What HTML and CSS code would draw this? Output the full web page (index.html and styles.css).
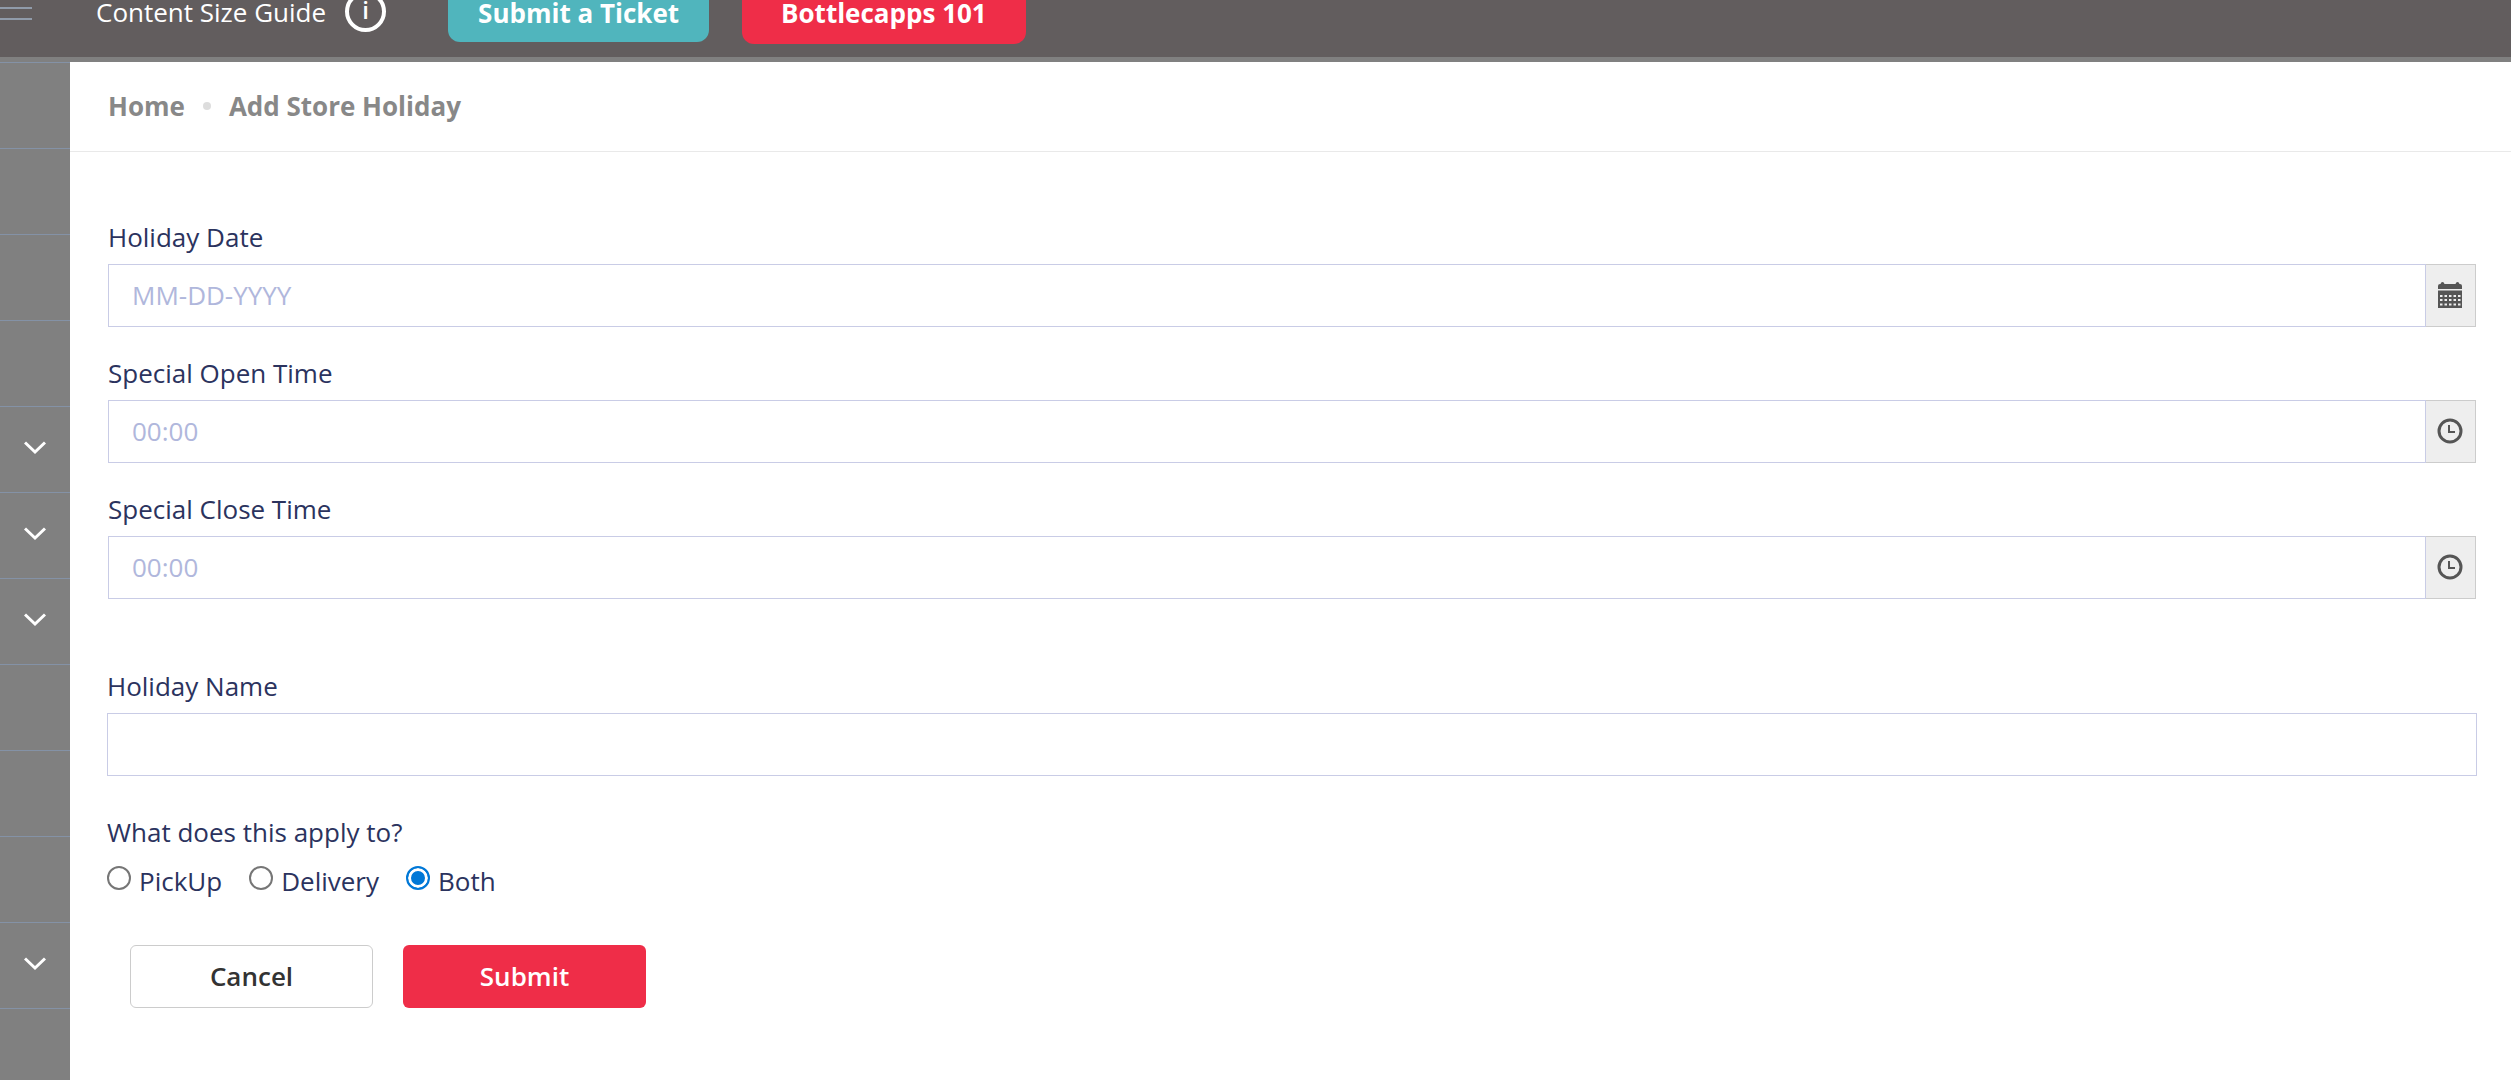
FILE: index.html
```html
<!DOCTYPE html>
<html lang="en">
<head>
    <meta charset="UTF-8">
    <meta name="viewport" content="width=device-width, initial-scale=1.0">
    <title>Add Store Holiday</title>
    <link rel="stylesheet" href="styles.css">
</head>
<body>
    <header class="topbar">
        <button type="button" class="menu-toggle" aria-label="Toggle menu">
            <span></span>
            <span></span>
        </button>
        <a href="#guide" class="guide-link">
            Content Size Guide
            <span class="info-icon">i</span>
        </a>
        <a href="#ticket" class="top-btn ticket-btn">Submit a Ticket</a>
        <a href="#help" class="top-btn help-btn">Bottlecapps 101</a>
    </header>

    <div class="layout">
        <!-- Collapsed sidebar -->
        <nav class="sidebar" aria-label="Main menu">
            <a href="#m1" class="side-item"></a>
            <a href="#m2" class="side-item"></a>
            <a href="#m3" class="side-item"></a>
            <a href="#m4" class="side-item"></a>
            <a href="#m5" class="side-item">
                <svg width="22" height="14" viewBox="0 0 22 14"><path d="M1 1.5 L11 11 L21 1.5"/></svg>
            </a>
            <a href="#m6" class="side-item">
                <svg width="22" height="14" viewBox="0 0 22 14"><path d="M1 1.5 L11 11 L21 1.5"/></svg>
            </a>
            <a href="#m7" class="side-item">
                <svg width="22" height="14" viewBox="0 0 22 14"><path d="M1 1.5 L11 11 L21 1.5"/></svg>
            </a>
            <a href="#m8" class="side-item"></a>
            <a href="#m9" class="side-item"></a>
            <a href="#m10" class="side-item"></a>
            <a href="#m11" class="side-item">
                <svg width="22" height="14" viewBox="0 0 22 14"><path d="M1 1.5 L11 11 L21 1.5"/></svg>
            </a>
            <a href="#m12" class="side-item"></a>
        </nav>

        <main class="content">
            <div class="breadcrumb">
                <a href="#home">Home</a>
                <span class="dot"></span>
                <a href="#holiday">Add Store Holiday</a>
            </div>

            <form class="holiday-form">
                <div class="form-group">
                    <label for="holidayDate">Holiday Date</label>
                    <div class="input-group">
                        <input type="text" id="holidayDate" placeholder="MM-DD-YYYY">
                        <button type="button" class="addon" aria-label="Pick a date">
                            <svg width="24" height="26" viewBox="0 0 24 26">
                                <path fill="#555" d="M0 7V4Q0 2 2 2H2.500Q3 0 4.500 0Q6 0 6.500 2H17.500Q18 0 19.500 0Q21 0 21.500 2H22Q24 2 24 4V7Z"/>
                                <path fill="#555" d="M0 8.500H24V26H0Z"/>
                                <path stroke="#eee" stroke-width="2" stroke-dasharray="2.500 2" d="M2 14H22.500M2 18H22.500M2 22.500H22.500"/>
                            </svg>
                        </button>
                    </div>
                </div>

                <div class="form-group">
                    <label for="openTime">Special Open Time</label>
                    <div class="input-group">
                        <input type="text" id="openTime" placeholder="00:00">
                        <button type="button" class="addon" aria-label="Pick open time">
                            <svg width="26" height="26" viewBox="0 0 26 26" fill="none" stroke="#555">
                                <circle cx="13" cy="13" r="11" stroke-width="3"/>
                                <path stroke-width="2" d="M12 7V14H18"/>
                            </svg>
                        </button>
                    </div>
                </div>

                <div class="form-group">
                    <label for="closeTime">Special Close Time</label>
                    <div class="input-group">
                        <input type="text" id="closeTime" placeholder="00:00">
                        <button type="button" class="addon" aria-label="Pick close time">
                            <svg width="26" height="26" viewBox="0 0 26 26" fill="none" stroke="#555">
                                <circle cx="13" cy="13" r="11" stroke-width="3"/>
                                <path stroke-width="2" d="M12 7V14H18"/>
                            </svg>
                        </button>
                    </div>
                </div>

                <div class="form-group name-group">
                    <label for="holidayName">Holiday Name</label>
                    <input type="text" id="holidayName">
                </div>

                <fieldset class="apply-group">
                    <legend>What does this apply to?</legend>
                    <div class="radio-row">
                        <label><input type="radio" name="apply" value="pickup">PickUp</label>
                        <label><input type="radio" name="apply" value="delivery">Delivery</label>
                        <label><input type="radio" name="apply" value="both" checked>Both</label>
                    </div>
                </fieldset>

                <div class="form-actions">
                    <button type="button" class="btn btn-cancel">Cancel</button>
                    <button type="submit" class="btn btn-submit">Submit</button>
                </div>
            </form>
        </main>
    </div>
</body>
</html>
```
FILE: styles.css
```css
:root {
    --bar-color: #625d5e;
    --side-color: #808080;
    --text-color: #2b335e;
    --border-color: #c9cce6;
    --red: #ef2d48;
    --teal: #50b5bd;
}

* {
    box-sizing: border-box;
    margin: 0;
    padding: 0;
}

body {
    font-family: 'Open Sans', sans-serif;
    font-size: 26px;
    line-height: 36px;
    color: var(--text-color);
    background-color: #fff;
    min-height: 100vh;
    display: flex;
    flex-direction: column;
    overflow: hidden;
}

a {
    color: inherit;
    text-decoration: none;
}

.topbar {
    display: flex;
    align-items: flex-end;
    height: 62px;
    background-color: var(--bar-color);
    border-bottom: 5px solid var(--side-color);
    color: #fff;
}

.menu-toggle {
    display: flex;
    flex-direction: column;
    gap: 9px;
    width: 32px;
    height: 50px;
    margin-right: 64px;
    background: none;
    border: none;
    cursor: pointer;
}

.menu-toggle span {
    width: 100%;
    height: 2px;
    background-color: #909baa;
}

.guide-link {
    display: flex;
    align-items: center;
    gap: 19px;
    margin: 0 62px 25px 0;
}

.info-icon {
    width: 41px;
    height: 41px;
    border: 4px solid #fff;
    border-radius: 50%;
    font-size: 24px;
    font-weight: 600;
    line-height: 30px;
    text-align: center;
}

.top-btn {
    padding: 11px 30px 13px;
    margin-bottom: 15px;
    border-radius: 12px;
    font-weight: 700;
    line-height: 32px;
}

.ticket-btn {
    margin-right: 33px;
    background-color: var(--teal);
}

.help-btn {
    padding: 11px 39px 15px;
    margin-bottom: 13px;
    background-color: var(--red);
}

.layout {
    display: flex;
    flex: 1;
}

/* Sidebar */
.sidebar {
    width: 70px;
    height: calc(100vh - 62px);
    overflow: hidden;
    background-color: var(--side-color);
}

.side-item {
    display: flex;
    align-items: center;
    justify-content: center;
    height: 86px;
    padding-bottom: 4px;
    border-top: 1px solid #8492a6;
}

.side-item svg {
    fill: none;
    stroke: #fff;
    stroke-width: 3;
}

/* Page content */
.content {
    flex: 1;
}

.breadcrumb {
    display: flex;
    align-items: center;
    gap: 18px;
    height: 90px;
    padding: 0 0 2px 38px;
    border-bottom: 1px solid #e9e9e9;
    color: #888;
    font-weight: 700;
}

.dot {
    width: 8px;
    height: 8px;
    border-radius: 50%;
    background-color: #ddd;
}

.holiday-form {
    padding: 67px 34px 0 37px;
}

.form-group {
    display: flex;
    flex-direction: column;
    gap: 9px;
    margin: 0 1px 28px;
}

.input-group {
    display: flex;
}

input[type="text"] {
    flex: 1;
    height: 63px;
    min-height: 63px;
    padding: 0 23px 1px;
    border: 1px solid var(--border-color);
    font: inherit;
    color: inherit;
    background-color: #fff;
}

input::placeholder {
    color: #b0b7dc;
    opacity: 1;
}

.addon {
    display: flex;
    align-items: center;
    justify-content: center;
    width: 50px;
    padding: 0 2px 2px 0;
    border: 1px solid #ccc;
    border-left: none;
    background-color: #eee;
    cursor: pointer;
}

.name-group {
    margin: 69px 0 38px;
}

.apply-group {
    border: none;
}

.radio-row {
    display: flex;
    gap: 27px;
    margin-top: 13px;
}

.radio-row label {
    display: flex;
    gap: 8px;
}

input[type="radio"] {
    appearance: none;
    width: 24px;
    height: 24px;
    margin-top: 3px;
    border: 2px solid #767676;
    border-radius: 50%;
}

input[type="radio"]:checked {
    border-color: #0078d7;
    background-color: #0078d7;
    box-shadow: inset 0 0 0 3px #fff;
}

.form-actions {
    display: flex;
    gap: 30px;
    padding: 46px 0 0 23px;
}

.btn {
    width: 243px;
    height: 63px;
    padding-bottom: 2px;
    border: none;
    border-radius: 6px;
    font: inherit;
    font-weight: 600;
    cursor: pointer;
}

.btn-cancel {
    border: 1px solid #ccc;
    color: #333;
    background-color: #fff;
}

.btn-submit {
    color: #fff;
    background-color: var(--red);
}
```
